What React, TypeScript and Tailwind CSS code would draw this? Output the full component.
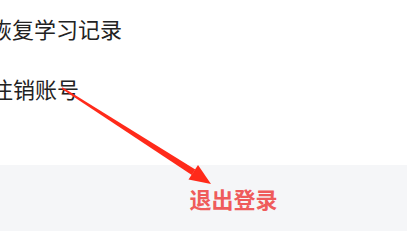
export default function App() {
  return (
    <div
      className="relative w-[407px] h-[231px] overflow-hidden bg-white"
      style={{ fontFamily: '"Noto Sans CJK SC", "Noto Sans", sans-serif' }}
    >
      <div className="h-[165px] flex flex-col">
        <div className="h-[56px] flex items-center ml-[-10px] text-[22px] text-[#222]">
          恢复学习记录
        </div>
        <div className="h-[64px] flex items-center ml-[-9px] text-[22px] text-[#222]">
          注销账号
        </div>
      </div>
      <div className="h-[66px] bg-[#f5f6f8] flex items-start justify-center pt-[20px] pl-[60px]">
        <span className="text-[22px] font-bold text-[#ef5b5b] leading-[26px]">退出登录</span>
      </div>
      <svg
        className="absolute left-0 top-0 pointer-events-none"
        width="407"
        height="231"
        viewBox="0 0 407 231"
      >
        <polygon points="61.5,88.8 62.5,87.2 195.3,169.5 191.8,175" fill="#ff2a1a" />
        <polygon points="188.5,179.5 198,165 211,184" fill="#ff2a1a" />
      </svg>
    </div>
  );
}
